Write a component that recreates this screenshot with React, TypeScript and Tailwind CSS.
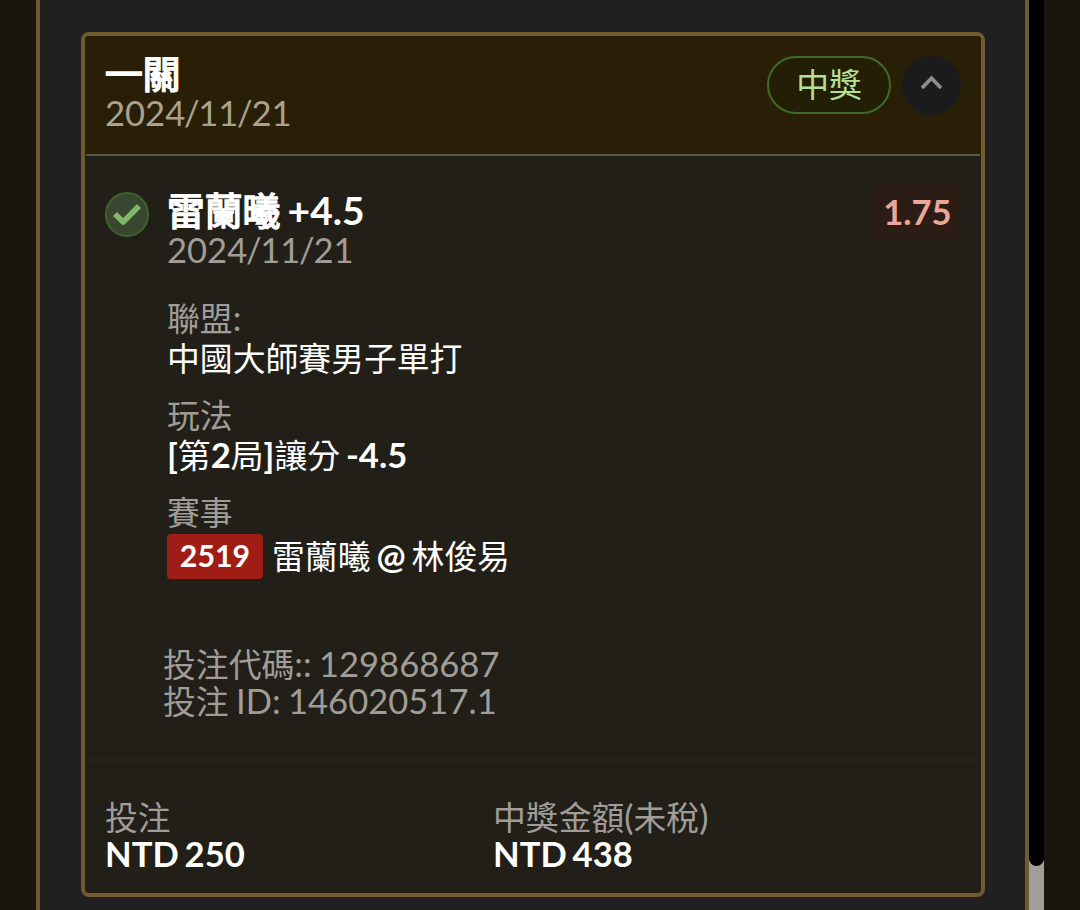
import React from 'react';

const Cjk: React.FC<{ children: React.ReactNode; heavy?: boolean }> = ({ children, heavy }) => (
  <span
    className={
      heavy
        ? "font-['Noto_Sans_CJK_TC',sans-serif] text-[37.7px] font-normal leading-[0] [-webkit-text-stroke:1.7px_#fff]"
        : "font-['Noto_Sans_CJK_TC',sans-serif] text-[32.85px] font-normal leading-[0]"
    }
  >
    {children}
  </span>
);

const BetDate: React.FC = () => (
  <>
    2024<span className="-mx-[1.3px]">/</span>11<span className="-mx-[1.3px]">/</span>21
  </>
);

const Label: React.FC<{ children: React.ReactNode }> = ({ children }) => (
  <div className="h-[40px] leading-[40px] text-[#a09d98] whitespace-nowrap">{children}</div>
);

const Value: React.FC<{ children: React.ReactNode }> = ({ children }) => (
  <div className="h-[40px] leading-[40px] font-bold text-white whitespace-nowrap">{children}</div>
);

const BetHeader: React.FC = () => (
  <div className="px-[1px]">
    <div className="-mx-[1px] flex h-[118px] items-start justify-between bg-[#291e06] p-5">
      <div>
        <div className="h-[38px] leading-[37px] text-white">
          <Cjk heavy>一關</Cjk>
        </div>
        <div className="h-[38px] leading-[38px] text-[#aaa28f]"><BetDate /></div>
      </div>
      <div className="flex gap-[11px]">
        <div className="h-[58px] w-[124px] rounded-full border-2 border-[#3f6a28] bg-[#231f06] text-center leading-[52px] text-[#b5de97]">
          <Cjk>中獎</Cjk>
        </div>
        <div className="flex h-[59px] w-[59px] items-center justify-center rounded-full bg-[#1b1b1d]">
          <svg width="24" height="18" viewBox="0 0 24 18" fill="none" className="mb-[7px]">
            <path d="M2 15L11.5 5.2L21 15" stroke="#8e8e8e" strokeWidth="3.6" />
          </svg>
        </div>
      </div>
    </div>
    <div className="h-[2px] bg-[#5a5643]" />
  </div>
);

const BetDetail: React.FC = () => (
  <div className="flex h-[603px] pl-5 pr-[21px] pt-[36px]">
    <div className="flex h-[45px] w-[44px] shrink-0 items-center justify-center rounded-full border-2 border-[#3c6429] bg-[#394630]">
      <svg width="30" height="26" viewBox="0 0 30 26" fill="none" className="mb-[2px] shrink-0">
        <path d="M3 13L11.2 21L27 5" stroke="#83b768" strokeWidth="5.6" strokeLinejoin="round" />
      </svg>
    </div>
    <div className="ml-[18px] grow">
      <div className="flex justify-between">
        <div>
          <div className="h-[39px] text-[39px] font-bold leading-[36px] text-white [word-spacing:-2px]">
            <Cjk heavy>雷蘭曦</Cjk> +4.5
          </div>
          <div className="h-[37px] leading-[38px] text-[#a09d98]"><BetDate /></div>
        </div>
        <div className="-mt-[8px] h-[56px] w-[86px] rounded bg-[#2c1c16] pl-[1px] text-center font-bold leading-[56px] text-[#eba698]">
          1.75
        </div>
      </div>

      <div className="mt-[30px] flex flex-col gap-[17px]">
        <div>
          <Label><Cjk>聯盟</Cjk>:</Label>
          <Value><Cjk>中國大師賽男子單打</Cjk></Value>
        </div>
        <div>
          <Label><Cjk>玩法</Cjk></Label>
          <Value>[<Cjk>第</Cjk>2<Cjk>局</Cjk>]<Cjk>讓分</Cjk> -4.5</Value>
        </div>
        <div>
          <Label><Cjk>賽事</Cjk></Label>
          <div className="flex items-center gap-[9px]">
            <span className="mt-[2px] h-[45px] w-[96px] rounded bg-[#9f1d15] text-center text-[30.3px] font-bold leading-[43px] text-white">
              2519
            </span>
            <Value><Cjk>雷蘭曦</Cjk> @ <Cjk>林俊易</Cjk></Value>
          </div>
        </div>
      </div>

      <div className="mr-[8px] mt-[36px] h-[2px] bg-[#26221c]" />

      <div className="-ml-[4px] mt-[28px] whitespace-nowrap leading-[38px] text-[#a09d98] [word-spacing:-1.5px]">
        <div className="h-[37px]"><Cjk>投注代碼</Cjk>:: 129868687</div>
        <div className="h-[38px]"><Cjk>投注</Cjk> ID: 146020517.1</div>
      </div>
    </div>
  </div>
);

const BetTotals: React.FC = () => (
  <div className="mx-[2px] flex grow border-t-2 border-[#262320] pl-[18px] pt-[36px]">
    <div className="w-[388px]">
      <Label><Cjk>投注</Cjk></Label>
      <div className="-mt-[3px]"><Value>NTD 250</Value></div>
    </div>
    <div>
      <Label><Cjk>中獎金額</Cjk>(<Cjk>未稅</Cjk>)</Label>
      <div className="-mt-[3px]"><Value>NTD 438</Value></div>
    </div>
  </div>
);

export default function App() {
  return (
    <div className="flex h-[910px] w-[1080px] overflow-hidden bg-[#19150f] pl-9 font-['Lato','Noto_Sans_CJK_TC',sans-serif] text-[34.6px] [word-spacing:-2.5px]">
      <div className="h-full w-[993px] border-x-4 border-[#715930] bg-[#202020] pl-[41px] pt-[32px]">
        <div className="flex h-[865px] w-[904px] flex-col overflow-hidden rounded-lg border-4 border-[#715930] bg-[#221f19]">
          <BetHeader />
          <BetDetail />
          <BetTotals />
        </div>
      </div>
      <div className="h-full w-[15px] bg-[#a09f99]">
        <div className="h-[866px] rounded-b-full bg-black" />
      </div>
    </div>
  );
}
